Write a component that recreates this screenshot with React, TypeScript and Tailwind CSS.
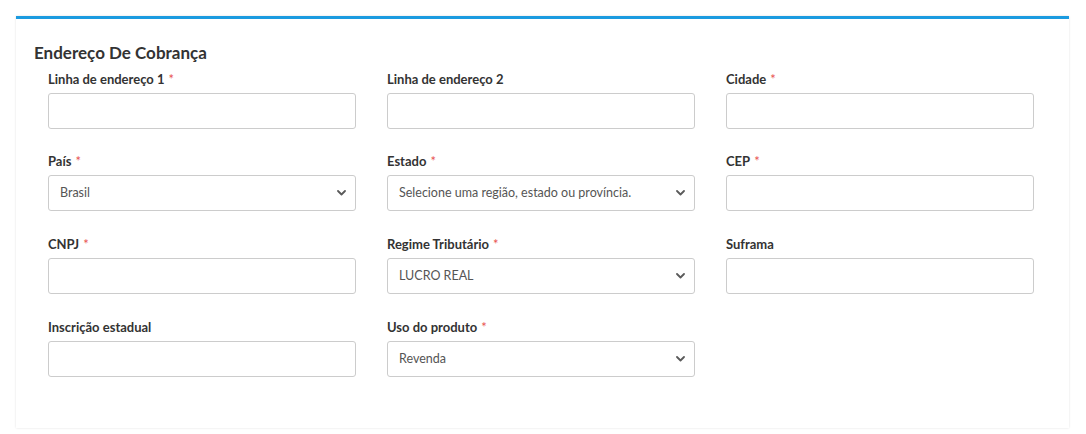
import type { ReactNode } from 'react'

type Field = {
  label: string
  required?: boolean
  select?: string
}

const FIELDS: (Field | null)[] = [
  { label: 'Linha de endereço 1', required: true },
  { label: 'Linha de endereço 2' },
  { label: 'Cidade', required: true },
  { label: 'País', required: true, select: 'Brasil' },
  { label: 'Estado', required: true, select: 'Selecione uma região, estado ou província.' },
  { label: 'CEP', required: true },
  { label: 'CNPJ', required: true },
  { label: 'Regime Tributário', required: true, select: 'LUCRO REAL' },
  { label: 'Suframa' },
  { label: 'Inscrição estadual' },
  { label: 'Uso do produto', required: true, select: 'Revenda' },
  null,
]

function Chevron() {
  return (
    <svg width="9" height="6" viewBox="0 0 9 6" className="pointer-events-none absolute right-[10px] top-[15px]">
      <path d="M1 1 L4.5 4.5 L8 1" fill="none" stroke="#5a5a5a" strokeWidth="1.8" strokeLinecap="round" strokeLinejoin="round" />
    </svg>
  )
}

function Label({ children, required }: { children: ReactNode; required?: boolean }) {
  return (
    <label className="block h-[18px] leading-[18px] text-[13px] font-bold text-[#333] mb-[5px]">
      {children}
      {required && <span className="ml-[4px] text-[#e8534f] font-normal">*</span>}
    </label>
  )
}

function FormField({ field, first }: { field: Field; first: boolean }) {
  return (
    <div className={first ? 'mb-[23px]' : 'mb-[24px]'}>
      <Label required={field.required}>{field.label}</Label>
      {field.select ? (
        <div className="relative">
          <div className="h-[36px] w-full rounded-[3px] border border-[#ccc] bg-white pl-[11px] leading-[34px] text-[12.5px] text-[#555]">
            {field.select}
          </div>
          <Chevron />
        </div>
      ) : (
        <input className="block h-[36px] w-full rounded-[3px] border border-[#ccc] bg-white px-[11px] text-[13px] outline-none" />
      )}
    </div>
  )
}

export default function App() {
  return (
    <div className="min-h-[434px] bg-white pt-[16px] pl-[16px]" style={{ fontFamily: 'Lato, "Open Sans", sans-serif' }}>
      <div className="w-[1053px] border-t-[3px] border-[#1b9be0] bg-white shadow-[0_0_2px_rgba(0,0,0,0.12)] pb-[27px]">
        <h3 className="pl-[18px] pt-[23px] h-[45px] leading-[22px] text-[17px] font-bold text-[#333]">
          Endereço De Cobrança
        </h3>
        <div className="mt-[6px] grid grid-cols-[308px_308px_308px] gap-x-[31px] pl-[32px]">
          {FIELDS.map((f, i) => (f ? <FormField key={i} field={f} first={i < 3} /> : <div key={i} />))}
        </div>
      </div>
    </div>
  )
}
